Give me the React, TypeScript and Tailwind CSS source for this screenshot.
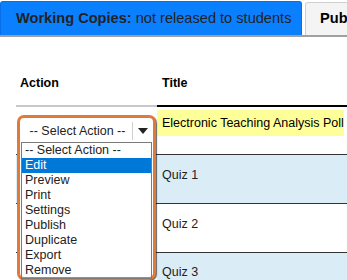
import React from "react";

export default function App() {
  const items = ["-- Select Action --", "Edit", "Preview", "Print", "Settings", "Publish", "Duplicate", "Export", "Remove"];
  return (
    <div className="relative w-[347px] h-[280px] overflow-hidden bg-white" style={{ fontFamily: '"Liberation Sans", Arial, sans-serif' }}>
      {/* tabs */}
      <div className="flex items-end h-[37px] border-b-2 border-[#a0a0a0] overflow-hidden">
        <div className="shrink-0 h-[34px] w-[302px] bg-[#0a80ff] border border-b-0 border-[#0a6ee6] rounded-t-[3px] flex items-center pl-[15px] text-[14.6px] text-[#222] whitespace-nowrap">
          <span className="font-bold">Working Copies:</span>
          <span className="ml-[4px]">not released to students</span>
        </div>
        <div className="shrink-0 ml-[3px] h-[33px] w-[120px] bg-[#f4f4f4] border border-b-0 border-[#cfcfcf] rounded-t-[3px] flex items-center pl-[14px] text-[14.6px] font-bold text-black whitespace-nowrap">
          Published
        </div>
      </div>
      {/* table */}
      <div className="pl-[16px] text-[12.5px] text-[#222]">
        <div className="flex h-[70px]">
          <div className="w-[141px] border-b-2 border-[#c8c8c8] flex items-center pl-[4px] pt-[24px] font-bold text-black">Action</div>
          <div className="flex-1 border-b-2 border-black flex items-center pl-[5px] pt-[24px] font-bold text-black">Title</div>
        </div>
        <div className="flex h-[47px] bg-white">
          <div className="w-[141px]"></div>
          <div className="flex-1 pt-[3px]">
            <div className="w-[187px] h-[26px] bg-[#ffff99] flex items-center pl-[5px] text-black whitespace-nowrap">Electronic Teaching Analysis Poll</div>
          </div>
        </div>
        <div className="flex h-[49px] bg-[#daedf7] border-t border-[#333]">
          <div className="w-[141px]"></div>
          <div className="flex-1 pl-[5px] pt-[11px]">Quiz 1</div>
        </div>
        <div className="flex h-[49px] bg-white border-t border-[#333]">
          <div className="w-[141px]"></div>
          <div className="flex-1 pl-[5px] pt-[11px]">Quiz 2</div>
        </div>
        <div className="flex h-[49px] bg-[#daedf7] border-t border-[#333]">
          <div className="w-[141px] bg-white"></div>
          <div className="flex-1 pl-[5px] pt-[10px]">Quiz 3</div>
        </div>
      </div>
      {/* highlighted select overlay */}
      <div className="absolute left-[17px] top-[115px] w-[139px] h-[165px] border-[3px] border-[#e07a3a] rounded-[7px] bg-white p-[1px] shadow-[1px_1px_1px_rgba(0,0,0,0.6)]">
        <div className="flex h-[22px] mt-[1px] items-center text-[12.5px] text-[#222] bg-white">
          <div className="w-[111px] text-center pl-[2px]">-- Select Action --</div>
          <div className="w-px h-[18px] bg-[#cfcfcf]"></div>
          <div className="flex-1 flex items-center justify-center">
            <svg width="10" height="6" viewBox="0 0 10 6"><path d="M0 0 L10 0 L5 6 Z" fill="#222" /></svg>
          </div>
        </div>
        <div className="border border-[#7a7a7a] text-[12.5px] leading-[15px]">
          {items.map((it) => (
            <div key={it} className={it === "Edit" ? "bg-[#0078d7] text-white pl-[3px] h-[15px]" : "text-[#222] pl-[3px] h-[15px]"}>{it}</div>
          ))}
        </div>
      </div>
    </div>
  );
}
